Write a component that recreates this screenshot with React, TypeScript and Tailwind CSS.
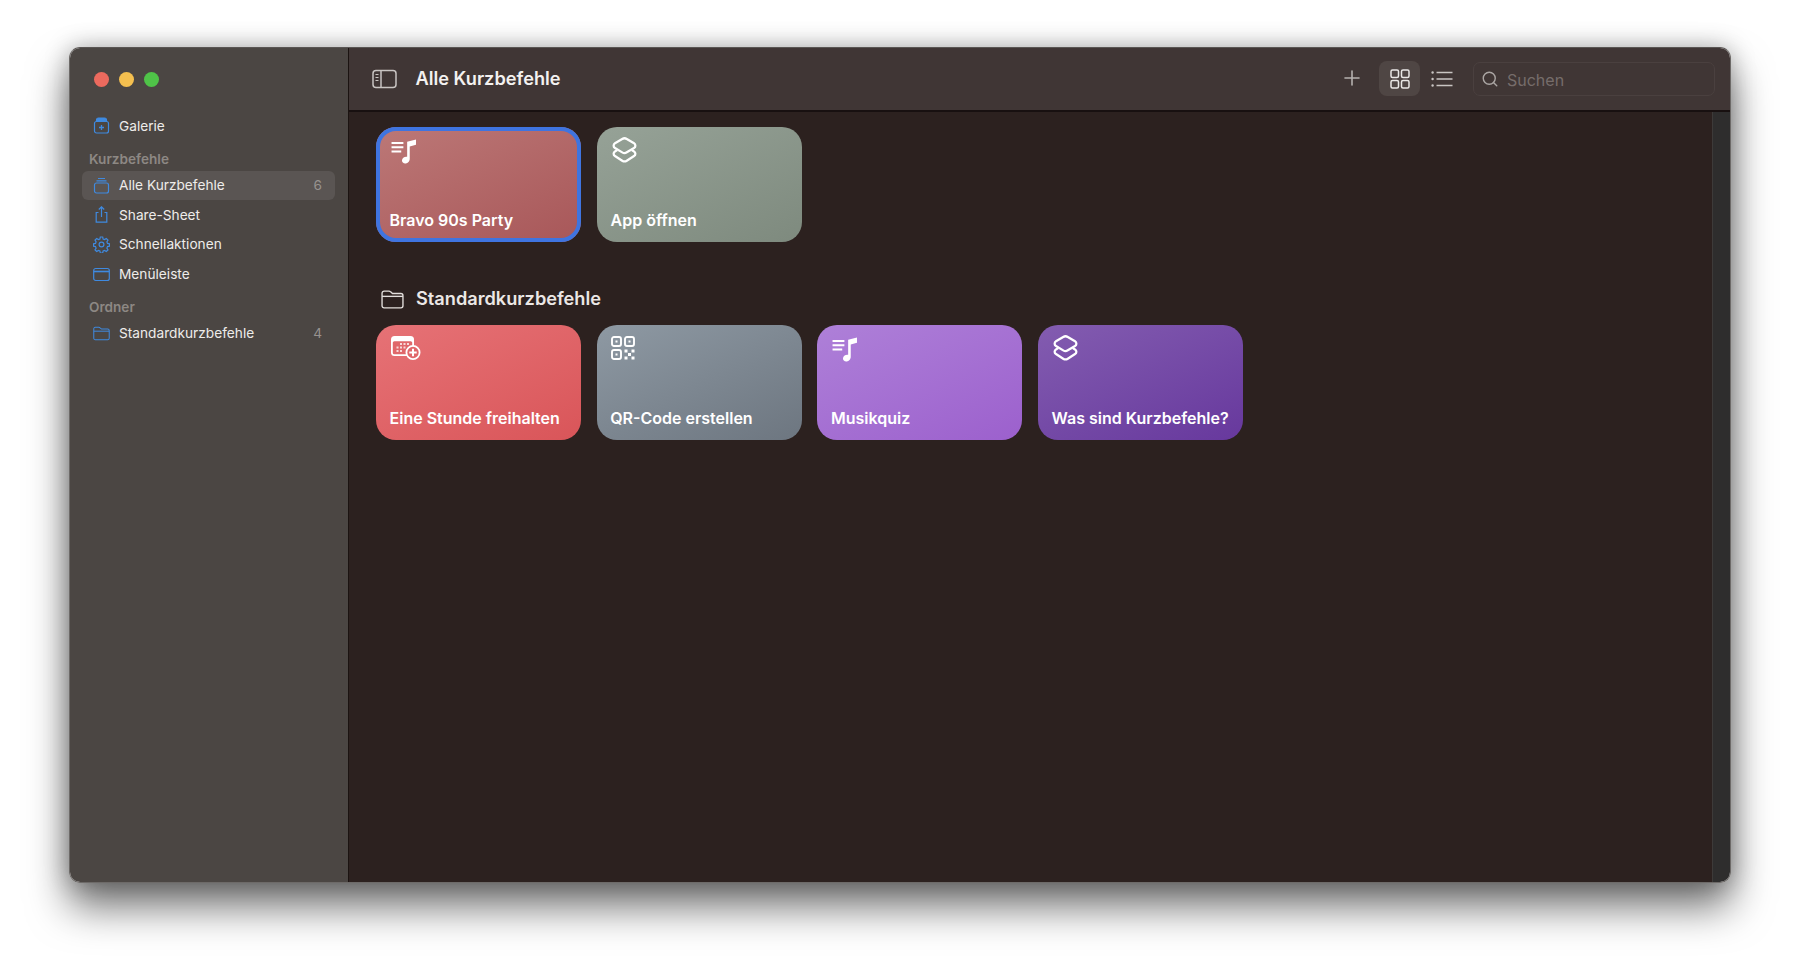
import { Plus, Search } from "lucide-react"

const font = { fontFamily: "Inter, 'Liberation Sans', sans-serif" }

function MusicIcon() {
  return (
    <svg width="28" height="28" viewBox="0 0 26 26" fill="none" className="text-white ml-[1px] mt-[1px]">
      <path d="M0.5 5.5h11M0.5 9.5h11M0.5 13.5h9" stroke="currentColor" strokeWidth="1.8" />
      <path d="M15 4.5l8.2-2.2v5l-5.8 1.6v11.2c0 2.4-1.8 4.4-4.2 4.4-1.8 0-3-1.2-3-2.7 0-2 1.9-3.5 4-3.5.4 0 .7 0 .8.1V4.5z" fill="currentColor" />
    </svg>
  )
}

function LayersIcon() {
  return (
    <svg width="27" height="28" viewBox="0 0 26 27" fill="none" stroke="currentColor" strokeWidth="2.2" strokeLinejoin="round" className="text-white mt-[1px]">
      <path d="M10.8 1.9c1.3-.8 3.1-.8 4.4 0l7 4.2c1.7 1 1.7 3.5 0 4.5l-7 4.2c-1.3.8-3.1.8-4.4 0l-7-4.2c-1.7-1-1.7-3.5 0-4.5l7-4.2z" />
      <path d="M6 12.6l-2.2 1.3c-1.7 1-1.7 3.5 0 4.5l7 4.5c1.3.8 3.1.8 4.4 0l7-4.5c1.7-1 1.7-3.5 0-4.5L20 12.6" />
    </svg>
  )
}

function CalendarIcon() {
  return (
    <svg width="31" height="25" viewBox="0 0 31 25" fill="none" className="text-white mt-[1px]">
      <rect x="1" y="1" width="23" height="20" rx="3.5" fill="currentColor" />
      <rect x="2.8" y="6.2" width="19.4" height="13" rx="1.5" fill="#e0676a" />
      <g fill="currentColor" opacity="0.75">
        <rect x="10" y="8" width="2" height="2" /><rect x="13.5" y="8" width="2" height="2" /><rect x="17" y="8" width="2" height="2" />
        <rect x="6.5" y="11.5" width="2" height="2" /><rect x="10" y="11.5" width="2" height="2" /><rect x="13.5" y="11.5" width="2" height="2" />
        <rect x="6.5" y="15" width="2" height="2" /><rect x="10" y="15" width="2" height="2" />
      </g>
      <circle cx="23" cy="17.5" r="6.6" fill="#e0676a" stroke="currentColor" strokeWidth="1.8" />
      <path d="M23 13.8v7.4M19.3 17.5h7.4" stroke="currentColor" strokeWidth="2" />
    </svg>
  )
}

function QrIcon() {
  return (
    <svg width="24" height="24" viewBox="0 0 24 24" fill="none" stroke="currentColor" strokeWidth="1.9" className="text-white ml-[1px] mt-[2px]">
      <rect x="1" y="1" width="9" height="9" rx="2" />
      <rect x="14" y="1" width="9" height="9" rx="2" />
      <rect x="1" y="14" width="9" height="9" rx="2" />
      <rect x="4.5" y="4.5" width="2" height="2" fill="currentColor" stroke="none" />
      <rect x="17.5" y="4.5" width="2" height="2" fill="currentColor" stroke="none" />
      <rect x="4.5" y="17.5" width="2" height="2" fill="currentColor" stroke="none" />
      <g fill="currentColor" stroke="none">
        <rect x="13.5" y="13.5" width="3" height="3" /><rect x="20.5" y="13.5" width="3" height="3" />
        <rect x="17" y="17" width="3" height="3" /><rect x="13.5" y="20.5" width="3" height="3" /><rect x="20.5" y="20.5" width="3" height="3" />
      </g>
    </svg>
  )
}

function FolderIcon({ className, w, h }: { className: string; w: number; h: number }) {
  return (
    <svg width={w} height={h} viewBox="0 0 22 18" fill="none" stroke="currentColor" strokeWidth="1.3" className={className}>
      <path d="M1 4V3c0-1.2.8-2 2-2h4.5c.7 0 1.2.2 1.7.7L11 3.3h8c1.2 0 2 .8 2 2V15c0 1.2-.8 2-2 2H3c-1.2 0-2-.8-2-2V4z" />
      <path d="M1 6h20" />
    </svg>
  )
}

function SidebarIcon({ kind }: { kind: string }) {
  const cls = "text-[#3f8ae0] shrink-0"
  if (kind === "galerie")
    return (
      <svg width="17" height="17" viewBox="0 0 17 17" fill="none" stroke="currentColor" strokeWidth="1.2" className={cls}>
        <rect x="1.5" y="4.5" width="14" height="11.5" rx="2" />
        <path d="M3.5 4.5V3c0-1 .7-2 2-2h6c1.3 0 2 1 2 2v1.5z" fill="currentColor" />
        <path d="M8.5 8v5M6 10.5h5" strokeWidth="1.3" />
      </svg>
    )
  if (kind === "alle")
    return (
      <svg width="17" height="17" viewBox="0 0 17 17" fill="none" stroke="currentColor" strokeWidth="1.2" className={cls}>
        <rect x="1.5" y="6" width="14" height="10" rx="2" />
        <path d="M3.5 3.8h10M5 1.5h7" />
      </svg>
    )
  if (kind === "share")
    return (
      <svg width="17" height="17" viewBox="0 0 17 17" fill="none" stroke="currentColor" strokeWidth="1.2" className={cls}>
        <path d="M5.5 6.5H3.2v9.7h10.6V6.5h-2.3" />
        <path d="M8.5 11V1M5.8 3.5l2.7-2.7 2.7 2.7" />
      </svg>
    )
  if (kind === "gear")
    return (
      <svg width="17" height="17" viewBox="0 0 17 17" fill="none" stroke="currentColor" strokeWidth="1.2" className={cls}>
        <circle cx="8.5" cy="8.5" r="2.4" />
        <path d="M7.3 1h2.4l.4 2 1.5.6 1.7-1.1 1.7 1.7-1.1 1.7.6 1.5 2 .4v2.4l-2 .4-.6 1.5 1.1 1.7-1.7 1.7-1.7-1.1-1.5.6-.4 2H7.3l-.4-2-1.5-.6-1.7 1.1L2 13.8l1.1-1.7-.6-1.5-2-.4V7.8l2-.4.6-1.5L2 4.2l1.7-1.7 1.7 1.1 1.5-.6.4-2z" />
      </svg>
    )
  if (kind === "menu")
    return (
      <svg width="17" height="17" viewBox="0 0 17 17" fill="none" stroke="currentColor" strokeWidth="1.2" className={cls}>
        <rect x="0.7" y="2.5" width="15.6" height="12" rx="2" />
        <path d="M0.7 5.5h15.6" strokeWidth="1.6" />
      </svg>
    )
  return <FolderIcon className={cls} w={17} h={15} />
}

const items = [
  { label: "Alle Kurzbefehle", icon: "alle", count: "6", active: true },
  { label: "Share-Sheet", icon: "share" },
  { label: "Schnellaktionen", icon: "gear" },
  { label: "Menüleiste", icon: "menu" },
]

function SideRow({ label, icon, count, active }: { label: string; icon: string; count?: string; active?: boolean }) {
  return (
    <div className={`flex items-center h-[29.6px] pl-[11px] pr-[13px] gap-[9px] rounded-[6px] text-[13.7px] text-[#eeecea] ${active ? "bg-[#5a5553]" : ""}`}>
      <SidebarIcon kind={icon} />
      <span>{label}</span>
      {count && <span className="ml-auto text-[#97928f]">{count}</span>}
    </div>
  )
}

function Card({ title, icon, className }: { title: string; icon: React.ReactNode; className: string }) {
  return (
    <div className={`relative w-[205px] h-[115px] rounded-[20px] flex flex-col justify-between pl-[13.5px] pt-[9px] pb-[12px] text-white ${className}`}>
      <div className="h-[26px] flex items-start">{icon}</div>
      <div className="text-[16px] font-semibold leading-[20px] whitespace-nowrap">{title}</div>
    </div>
  )
}

export default function App() {
  return (
    <div className="w-full h-[975px] bg-white overflow-hidden pl-[69px] pt-[47px]" style={font}>
      <div className="w-[1662px] h-[836px] flex rounded-[11px] overflow-hidden border-t border-x border-b border-t-[#5a5654] border-x-[#6d6a68] border-b-[#6d6a68] shadow-[0_24px_40px_rgba(0,0,0,0.55),0_0_24px_rgba(0,0,0,0.28)]">
        {/* Sidebar */}
        <aside className="w-[279px] shrink-0 bg-[#4b4643] border-r border-[#1b1311] pl-[12px] pr-[13px]">
          <div className="flex gap-[10px] pt-[24px] pl-[12px]">
            <div className="w-[15px] h-[15px] rounded-full bg-[#ec6a5e]" />
            <div className="w-[15px] h-[15px] rounded-full bg-[#f4bf4f]" />
            <div className="w-[15px] h-[15px] rounded-full bg-[#4fc348]" />
          </div>
          <div className="mt-[24px]">
            <SideRow label="Galerie" icon="galerie" />
          </div>
          <div className="mt-[9px] h-[19px] pl-[7px] text-[13.6px] font-semibold text-[#8d8884] leading-[19px]">Kurzbefehle</div>
          <div className="mt-[2px]">
            {items.map((i) => (
              <SideRow key={i.label} {...i} />
            ))}
          </div>
          <div className="mt-[9px] h-[19px] pl-[7px] text-[13.6px] font-semibold text-[#8d8884] leading-[19px]">Ordner</div>
          <div className="mt-[1.5px]">
            <SideRow label="Standardkurzbefehle" icon="folder" count="4" />
          </div>
        </aside>

        {/* Main */}
        <div className="flex-1 flex flex-col min-w-0">
          <header className="h-[64px] shrink-0 bg-[#403635] border-b-2 border-[#181010] flex items-center pl-[23px] pr-[15px] pb-[1px]">
            <svg width="26" height="20" viewBox="0 0 26 20" fill="none" stroke="#c9c5c3" strokeWidth="1.5">
              <rect x="1" y="1.5" width="23" height="17" rx="3" />
              <path d="M9 1.5v17" />
              <path d="M3.5 5.5h3M3.5 8.5h3M3.5 11.5h3" strokeWidth="1.2" />
            </svg>
            <h1 className="ml-[17.5px] text-[18.2px] font-semibold text-[#f3f1f0]">Alle Kurzbefehle</h1>
            <Plus size={24} strokeWidth={1.6} className="ml-auto mb-[2px] text-[#b5b1af]" />
            <div className="ml-[15px] w-[41px] h-[35px] rounded-[8px] bg-[#4f4644] flex items-center justify-center">
              <svg width="20" height="20" viewBox="0 0 20 20" fill="none" stroke="#eae8e6" strokeWidth="1.5">
                <rect x="1" y="1" width="7.5" height="7.5" rx="1.5" />
                <rect x="11.5" y="1" width="7.5" height="7.5" rx="1.5" />
                <rect x="1" y="11.5" width="7.5" height="7.5" rx="1.5" />
                <rect x="11.5" y="11.5" width="7.5" height="7.5" rx="1.5" />
              </svg>
            </div>
            <svg width="22" height="16" viewBox="0 0 22 16" fill="none" stroke="#c9c5c3" strokeWidth="1.5" className="ml-[11px]">
              <path d="M5.5 1.5H21.5M5.5 8H21.5M5.5 14.5H21.5" />
              <circle cx="1.6" cy="1.5" r="1.2" fill="#c9c5c3" stroke="none" />
              <circle cx="1.6" cy="8" r="1.2" fill="#c9c5c3" stroke="none" />
              <circle cx="1.6" cy="14.5" r="1.2" fill="#c9c5c3" stroke="none" />
            </svg>
            <div className="ml-[20px] w-[242px] h-[34px] rounded-[7px] border border-[#4a403f] flex items-center pl-[7px] gap-[8px]">
              <Search size={18} strokeWidth={1.9} className="text-[#aaa5a3]" />
              <span className="text-[16px] text-[#766d6b] translate-y-[1px]">Suchen</span>
            </div>
          </header>

          <div className="flex-1 flex min-h-0">
            <main className="flex-1 bg-[#2c211f] pl-[27px] pt-[15px]">
              <div className="flex gap-[16px]">
                <Card
                  title="Bravo 90s Party"
                  icon={<MusicIcon />}
                  className="bg-linear-155 from-[#bc7877] to-[#a85759] outline-[4px] -outline-offset-[4px] outline-[#3f74e0]"
                />
                <Card title="App öffnen" icon={<LayersIcon />} className="bg-linear-155 from-[#96a297] to-[#7e8a7e]" />
              </div>
              <div className="mt-[39px] flex items-center h-[36px] pl-[5px]">
                <FolderIcon className="text-[#e3dfdc]" w={23} h={19} />
                <h2 className="ml-[12px] text-[18.2px] font-semibold text-[#ebe7e5]">Standardkurzbefehle</h2>
              </div>
              <div className="flex gap-[15.7px] mt-[8px]">
                <Card title="Eine Stunde freihalten" icon={<CalendarIcon />} className="bg-linear-155 from-[#e67276] to-[#d95559]" />
                <Card title="QR-Code erstellen" icon={<QrIcon />} className="bg-linear-155 from-[#8e99a3] to-[#6d7680]" />
                <Card title="Musikquiz" icon={<MusicIcon />} className="bg-linear-155 from-[#ae80d8] to-[#9c60cd]" />
                <Card title="Was sind Kurzbefehle?" icon={<LayersIcon />} className="bg-linear-155 from-[#835cb0] to-[#67389d]" />
              </div>
            </main>
            <div className="w-[18px] shrink-0 bg-[#2e2d2d] border-l border-[#3d3a39]" />
          </div>
        </div>
      </div>
    </div>
  )
}
